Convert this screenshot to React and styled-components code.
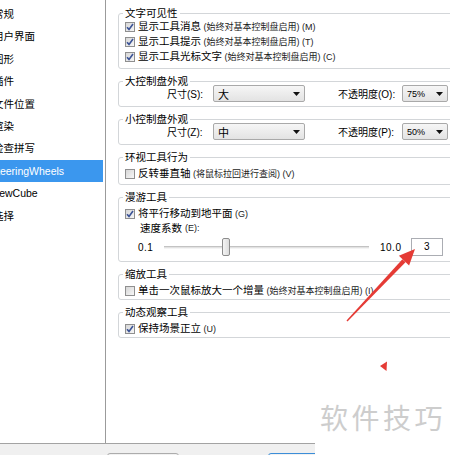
import styled, { createGlobalStyle } from "styled-components";

const GlobalStyle = createGlobalStyle`
  body {
    margin: 0;
    background: #ffffff;
  }
  * {
    box-sizing: border-box;
  }
`;

const Window = styled.div`
  position: relative;
  width: 450px;
  height: 455px;
  overflow: hidden;
  background: #f0f0f0;
  font-family: "Liberation Sans", "Noto Sans CJK SC", sans-serif;
  font-size: 10px;
  color: #000;
`;

const Main = styled.div`
  display: flex;
  height: 444px;
  border-bottom: 1px solid #a3a3a3;
`;

const NavList = styled.div`
  width: 106px;
  flex-shrink: 0;
  padding-top: 3px;
  background: #fff;
  border-right: 1px solid #9b9b9b;
  overflow: hidden;
`;

const NavItem = styled.div`
  height: 22.4px;
  line-height: 22.4px;
  font-size: 10.5px;
  text-indent: ${(p) => (p.latin ? "-10px" : "-7px")};
  white-space: nowrap;
  color: ${(p) => (p.active ? "#fff" : "#000")};
  background: ${(p) => (p.active ? "#3b97ee" : "transparent")};
  margin-right: 2px;
`;

const Panel = styled.div`
  flex: 1;
  display: flex;
  flex-direction: column;
  gap: 12px;
  padding: 13px 0 0 12px;
  background: #fff;
  overflow: hidden;
`;

const Group = styled.div`
  width: 345px;
  flex-shrink: 0;
  border: 1px solid #d3d6d9;
  border-radius: 3px;
  padding: 0 0 ${(p) => p.pb ?? 3}px 6px;
`;

const Legend = styled.div`
  display: block;
  width: fit-content;
  height: 12px;
  line-height: 12px;
  margin: -7px 0 0 -2px;
  padding: 0 2px;
  background: #fff;
  font-size: 10.5px;
  white-space: nowrap;
`;

const Row = styled.div`
  display: flex;
  align-items: center;
  gap: 3px;
  height: 15px;
  line-height: 15px;
  margin-top: ${(p) => p.mt ?? 0}px;
  padding-left: ${(p) => p.indent ?? 0}px;
  font-size: 10.5px;
  white-space: nowrap;
`;

const Hint = styled.span`
  font-size: 9px;
  color: #1a1a1a;
`;

const Box = styled.span`
  width: 10px;
  height: 10px;
  flex-shrink: 0;
  border: 1px solid #8f8f8f;
  background: linear-gradient(135deg, #d6d6d6, #f7f7f7);
  display: flex;
  align-items: center;
  justify-content: center;
`;

const SelectRow = styled.div`
  display: flex;
  align-items: center;
  height: 17px;
  margin-top: ${(p) => p.mt ?? 0}px;
  padding-left: 42px;
  white-space: nowrap;
`;

const FieldLabel = styled.span`
  width: ${(p) => p.w}px;
  margin-left: ${(p) => p.ml ?? 0}px;
  flex-shrink: 0;
`;

const Combo = styled.div`
  width: ${(p) => p.w}px;
  height: 17px;
  flex-shrink: 0;
  display: flex;
  align-items: center;
  justify-content: space-between;
  padding: 0 4px 0 4px;
  border: 1px solid #a9a9a9;
  border-radius: 2px;
  background: linear-gradient(#f6f6f6, #e3e3e3);
  font-size: ${(p) => (p.small ? "9px" : "11px")};
`;

const SliderRow = styled.div`
  display: flex;
  align-items: center;
  height: 20px;
  margin-top: 1px;
  padding-left: 13px;
`;

const SliderLabel = styled.span`
  width: ${(p) => p.w}px;
  margin-left: ${(p) => p.ml ?? 0}px;
  flex-shrink: 0;
  font-size: 10px;
  letter-spacing: 0.5px;
`;

const Track = styled.div`
  position: relative;
  width: 205px;
  height: 3px;
  flex-shrink: 0;
  border-top: 1px solid #c3c3c3;
  border-bottom: 1px solid #f4f4f4;
  background: #e2e2e2;
`;

const Thumb = styled.div`
  position: absolute;
  top: -9px;
  width: 8px;
  height: 18px;
  border: 1px solid #8c8c8c;
  border-radius: 2px;
  background: linear-gradient(90deg, #f4f4f4, #dcdcdc);
`;

const ValueBox = styled.div`
  width: 32px;
  height: 18px;
  margin-left: 9px;
  flex-shrink: 0;
  border: 1px solid #abadb3;
  background: #fff;
  padding-left: 12px;
  line-height: 16px;
  font-size: 10px;
`;

const Footer = styled.div`
  display: flex;
  padding: 9px 0 0 107px;
`;

const FootButton = styled.div`
  width: ${(p) => p.w}px;
  height: 22px;
  margin-left: ${(p) => p.ml ?? 0}px;
  border: 1px solid ${(p) => (p.primary ? "#3c8ed8" : "#acacac")};
  border-radius: 3px;
  background: linear-gradient(#f2f2f2, #e4e4e4);
`;

const Overlay = styled.svg`
  position: absolute;
  left: 0;
  top: 0;
  pointer-events: none;
`;

const Watermark = styled.div`
  position: absolute;
  left: 315px;
  top: 398px;
  right: 0;
  bottom: 0;
  background: #fff;
  padding: 5px 0 0 5px;
  font-family: "Noto Sans CJK SC", sans-serif;
  font-size: 28px;
  line-height: 28px;
  letter-spacing: 3.5px;
  color: #cdcdcd;
  white-space: nowrap;
`;

function Checkbox({ checked }) {
  return (
    <Box>
      {checked && (
        <svg width="8" height="8" viewBox="0 0 8 8">
          <path d="M1 4.2 L3 6.4 L7 1" fill="none" stroke="#3b5396" strokeWidth="1.6" />
        </svg>
      )}
    </Box>
  );
}

function Arrow() {
  return (
    <svg width="7" height="4" viewBox="0 0 7 4">
      <path d="M0 0 H7 L3.5 4 Z" fill="#111" />
    </svg>
  );
}

function Check({ checked, text, hint, mt }) {
  return (
    <Row mt={mt}>
      <Checkbox checked={checked} />
      <span>
        {text}
        <Hint>{hint}</Hint>
      </span>
    </Row>
  );
}

function Appearance({ title, sizeLabel, size, opLabel, op }) {
  return (
    <Group pb={4}>
      <Legend>{title}</Legend>
      <SelectRow mt={-2}>
        <FieldLabel w={46}>{sizeLabel}</FieldLabel>
        <Combo w={92}>
          <span>{size}</span>
          <Arrow />
        </Combo>
        <FieldLabel w={64} ml={33}>
          {opLabel}
        </FieldLabel>
        <Combo w={46} small>
          <span>{op}</span>
          <Arrow />
        </Combo>
      </SelectRow>
    </Group>
  );
}

const navItems = [
  { label: "常规" },
  { label: "用户界面" },
  { label: "图形" },
  { label: "插件" },
  { label: "文件位置" },
  { label: "渲染" },
  { label: "检查拼写" },
  { label: "SteeringWheels", latin: true, active: true },
  { label: "ViewCube", latin: true },
  { label: "选择" },
];

function App() {
  const speed = 3;
  const thumbLeft = ((speed - 0.1) / (10 - 0.1)) * 197;

  return (
    <Window>
      <GlobalStyle />
      <Main>
        <NavList>
          {navItems.map((item) => (
            <NavItem key={item.label} active={item.active} latin={item.latin}>
              {item.label}
            </NavItem>
          ))}
        </NavList>
        <Panel>
          <Group pb={4}>
            <Legend>文字可见性</Legend>
            <Check checked text="显示工具消息" hint=" (始终对基本控制盘启用) (M)" />
            <Check checked text="显示工具提示" hint=" (始终对基本控制盘启用) (T)" />
            <Check checked text="显示工具光标文字" hint=" (始终对基本控制盘启用) (C)" />
          </Group>

          <Appearance title="大控制盘外观" sizeLabel="尺寸(S):" size="大" opLabel="不透明度(O):" op="75%" />
          <Appearance title="小控制盘外观" sizeLabel="尺寸(Z):" size="中" opLabel="不透明度(P):" op="50%" />

          <Group pb={3}>
            <Legend>环视工具行为</Legend>
            <Check mt={3} text="反转垂直轴" hint=" (将鼠标拉回进行查阅) (V)" />
          </Group>

          <Group pb={4}>
            <Legend>漫游工具</Legend>
            <Check mt={3} checked text="将平行移动到地平面" hint=" (G)" />
            <Row indent={15}>
              速度系数<Hint>(E):</Hint>
            </Row>
            <SliderRow>
              <SliderLabel w={26}>0.1</SliderLabel>
              <Track>
                <Thumb style={{ left: thumbLeft }} />
              </Track>
              <SliderLabel w={22} ml={11}>
                10.0
              </SliderLabel>
              <ValueBox>{speed}</ValueBox>
            </SliderRow>
          </Group>

          <Group pb={1}>
            <Legend>缩放工具</Legend>
            <Check mt={3} text="单击一次鼠标放大一个增量" hint=" (始终对基本控制盘启用) (I)" />
          </Group>

          <Group pb={1}>
            <Legend>动态观察工具</Legend>
            <Check mt={3} checked text="保持场景正立" hint=" (U)" />
          </Group>
        </Panel>
      </Main>
      <Footer>
        <FootButton w={72} />
        <FootButton w={80} ml={89} primary />
      </Footer>

      <Overlay width="450" height="455" viewBox="0 0 450 455">
        <polygon
          points="346.5,320.6 347.5,321.4 405.5,262.2 402.4,259.3"
          fill="#e53b35"
        />
        <polygon points="415,249 398.9,255.8 409.1,265.4" fill="#e53b35" />
        <polygon points="380,366 387,361.5 386.5,371" fill="#e53b35" />
      </Overlay>
      <Watermark>软件技巧</Watermark>
    </Window>
  );
}

export default App;
